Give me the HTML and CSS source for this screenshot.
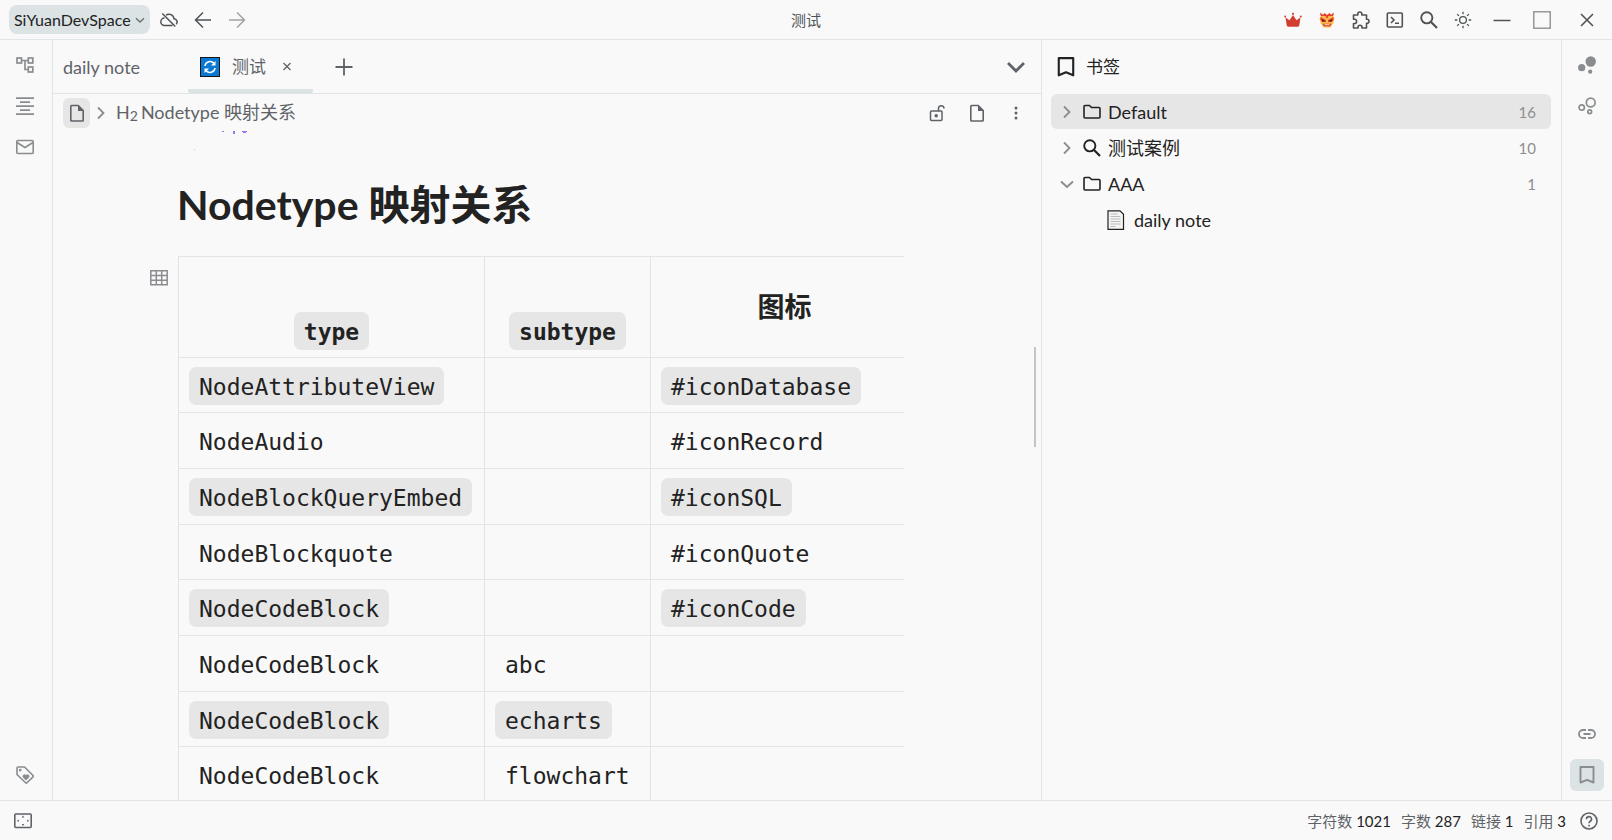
FILE: index.html
```html
<!DOCTYPE html>
<html lang="zh-CN">
<head>
<meta charset="utf-8">
<title>测试</title>
<link rel="stylesheet" href="styles.css">
</head>
<body>
<svg class="defs" aria-hidden="true">
  <symbol id="right" viewBox="0 0 18 18"><path d="M6 3.500l5.500 5.500-5.500 5.500" fill="none" stroke="currentColor" stroke-width="1.800"/></symbol>
  <symbol id="down" viewBox="0 0 18 18"><path d="M3 6.500l6 5.500 6-5.500" fill="none" stroke="currentColor" stroke-width="2"/></symbol>
  <symbol id="file" viewBox="0 0 18 18"><path d="M3.200 1.500h7l5 5v9.800q0 .7-.7.700H3.500q-.7 0-.7-.7V2.200q0-.7.700-.7z" fill="none" stroke="currentColor" stroke-width="1.600"/><path d="M10 1l6 6h-6z" fill="currentColor"/></symbol>
  <symbol id="folder" viewBox="0 0 18 18"><path d="M1 3.500q0-1 1-1h4.500l2 2H16q1 0 1 1V14q0 1-1 1H2q-1 0-1-1z" fill="none" stroke="currentColor" stroke-width="1.600"/></symbol>
  <symbol id="search" viewBox="0 0 18 18"><circle cx="6.800" cy="6.800" r="5.600" fill="none" stroke="currentColor" stroke-width="1.900"/><path d="M10.800 10.800l6.200 6.200" stroke="currentColor" stroke-width="2.200"/></symbol>
  <symbol id="bookmark" viewBox="0 0 18 18"><path d="M2.500 1h13v15.500L9 13.800l-6.500 2.700z" fill="none" stroke="currentColor" stroke-width="1.900" stroke-linejoin="round"/></symbol>
</svg>
<header class="topbar">
  <div class="side">
    <button class="workspace">SiYuanDevSpace<svg class="icon small"><use href="#down"/></svg></button>
    <button class="tool" aria-label="同步"><svg class="icon" viewBox="0 0 18 18" fill="none" stroke="currentColor" stroke-width="1.500"><path d="M6 4.200a5 5 0 0 1 8 3.600 3.200 3.200 0 0 1 2.200 5.400M12.500 14.500H4.500a3.700 3.700 0 0 1 0-7.400M2.300 2.500l13 13"/></svg></button>
    <button class="tool" aria-label="后退"><svg class="icon" viewBox="0 0 18 18" fill="none" stroke="currentColor" stroke-width="1.500"><path d="M17 9H2M9 1.500L1.500 9 9 16.500"/></svg></button>
    <button class="tool faded" aria-label="前进"><svg class="icon" viewBox="0 0 18 18" fill="none" stroke="currentColor" stroke-width="1.500"><path d="M1 9h15M9 1.500L16.500 9 9 16.500"/></svg></button>
  </div>
  <div class="title">测试</div>
  <div class="side end">
    <button class="tool" aria-label="会员"><svg class="icon" viewBox="0 0 18 18" fill="#d23f31"><path d="M2.500 13L1.500 6.500l4 2.700L9 4l3.500 5.200 4-2.700-1 6.500q-.2 2.800-1.500 2.800H4Q2.700 15.800 2.500 13z"/><circle cx="1.200" cy="5.500" r="1"/><circle cx="9" cy="2.800" r="1.100"/><circle cx="16.800" cy="5.500" r="1"/></svg></button>
    <button class="tool" aria-label="账号"><svg class="icon" viewBox="0 0 18 18"><path d="M3 6L2 1.500l3 2.300L6.500 2 9 4l2.500-2L13 3.800l3-2.300L15 6z" fill="#e8402f"/><path d="M1.500 7l2-2h11l2 2-1 5-3 4.500h-7l-3-4.500z" fill="#fbbd4c"/><path d="M2.500 6l5.500 3v2H4.500L2.500 9zM15.500 6L10 9v2h3.500l2-2zM7.500 5h3L9 8z" fill="#e8402f"/><path d="M3.500 8l4 2.200-3 .6zM14.500 8l-4 2.200 3 .6z" fill="#45221c"/><path d="M4.500 12.800h9L12 15.200H6z" fill="#d53527"/><path d="M6 13.200h6l-1 1H7z" fill="#fff5d6"/></svg></button>
    <button class="tool" aria-label="插件"><svg class="icon" viewBox="0 0 18 18" fill="none" stroke="currentColor" stroke-width="1.600"><path d="M1.500 4h4.300V3a2 2 0 0 1 4 0v1h4.700v4.300h.5a2 2 0 0 1 0 4h-.5V17H10v-.8a2 2 0 0 0-4 0v.8H1.500v-4.500h1a2 2 0 0 0 0-4.200h-1z" stroke-linejoin="round"/></svg></button>
    <button class="tool" aria-label="命令面板"><svg class="icon" viewBox="0 0 18 18" fill="none" stroke="currentColor" stroke-width="1.600"><rect x="1.300" y="2" width="15" height="14" rx="1"/><path d="M5 6l3 3-3 3M9 12.300h4"/></svg></button>
    <button class="tool" aria-label="搜索"><svg class="icon"><use href="#search"/></svg></button>
    <button class="tool" aria-label="外观"><svg class="icon" viewBox="0 0 18 18" fill="none" stroke="currentColor" stroke-width="1.300"><circle cx="9" cy="9" r="3.400"/><path d="M9 .8v2.500M9 14.700v2.500M.8 9h2.500M14.700 9h2.500M3.200 3.200l1.700 1.700M13.100 13.100l1.700 1.700M3.200 14.800l1.700-1.700M13.100 4.900l1.700-1.700"/></svg></button>
    <div class="windowbuttons">
      <button class="win" aria-label="最小化"><svg class="icon" viewBox="0 0 18 18" stroke="currentColor" stroke-width="1.500"><path d="M.5 9.500h17"/></svg></button>
      <button class="win" aria-label="最大化"><svg class="icon" viewBox="0 0 18 18" fill="none" stroke="#85898c"><rect x=".8" y=".8" width="16.400" height="16.400" stroke-width="1.300"/></svg></button>
      <button class="win close" aria-label="关闭"><svg class="icon" viewBox="0 0 18 18" stroke="currentColor" stroke-width="1.600"><path d="M3 3l12 12M15 3L3 15"/></svg></button>
    </div>
  </div>
</header>
<div class="workarea">
  <nav class="dock">
    <button aria-label="文档树"><svg class="icon" viewBox="0 0 18 18" fill="none" stroke="currentColor" stroke-width="1.700"><rect x="1" y="2" width="4.500" height="5"/><rect x="12.300" y="2" width="4.500" height="5"/><rect x="12.300" y="11" width="4.500" height="5"/><path d="M5.500 4.500h7M9 4.500V13.500h3.500"/></svg></button>
    <button aria-label="大纲"><svg class="icon" viewBox="0 0 18 18" stroke="currentColor" stroke-width="1.700"><path d="M0 1.200h18M4 5.200h10M0 9.200h18M4 13.200h10M0 17.200h18"/></svg></button>
    <button aria-label="收集箱"><svg class="icon" viewBox="0 0 18 18" fill="none" stroke="currentColor" stroke-width="1.600"><rect x=".8" y="2.500" width="16.400" height="13" rx="1"/><path d="M1 4.500l8 5 8-5"/></svg></button>
    <button class="push" aria-label="标签"><svg class="icon" viewBox="0 0 18 18" fill="none" stroke="currentColor" stroke-width="1.600"><path d="M1 2q0-1 1-1h6.500L17 9.500q.7.700 0 1.400L11 16.800q-.7.700-1.400 0L1 8.500z"/><circle cx="4.200" cy="4.200" r=".6"/><path d="M10 14.500L6.800 11.300a1.800 1.800 0 0 1 3.200-2 1.800 1.800 0 0 1 3.200 2z" fill="currentColor" stroke="none"/></svg></button>
  </nav>
  <main class="center">
    <div class="tabs">
      <button class="tab">daily note</button>
      <button class="tab active"><svg class="tabicon" viewBox="0 0 20 20"><rect x=".5" y=".5" width="19" height="19" fill="#0b78d4" stroke="#151515"/><path d="M5 9a5 5 0 0 1 9-2.500M15 11a5 5 0 0 1-9 2.500" fill="none" stroke="#fff" stroke-width="1.500"/><path d="M15.500 4v4.500H11zM4.500 16v-4.500H9z" fill="#fff"/></svg><span>测试</span><svg class="cross" viewBox="0 0 10 10" stroke="currentColor" stroke-width="1.300"><path d="M1.500 1l7 7M8.500 1l-7 7"/></svg></button>
      <button class="newtab" aria-label="新建"><svg class="icon" viewBox="0 0 18 18" stroke="currentColor" stroke-width="1.800"><path d="M9 .5v17M.5 9h17"/></svg></button>
      <button class="more" aria-label="更多标签"><svg class="icon" viewBox="0 0 18 18" fill="none" stroke="currentColor" stroke-width="2.800"><path d="M1 5l8 8 8-8"/></svg></button>
    </div>
    <div class="breadcrumb">
      <button class="crumbdoc" aria-label="文档"><svg class="icon"><use href="#file"/></svg></button>
      <svg class="icon arrow"><use href="#right"/></svg>
      <a class="crumb" href="#heading"><span>H<small>2</small></span>Nodetype 映射关系</a>
      <button class="action first" aria-label="锁定"><svg class="icon" viewBox="0 0 18 18" fill="none" stroke="currentColor" stroke-width="1.500"><rect x="1.500" y="7" width="11.500" height="9.500" rx="1"/><path d="M9.500 7V4.500a2.700 2.700 0 0 1 5.500 0"/><circle cx="7.200" cy="11.800" r="1" fill="currentColor"/></svg></button>
      <button class="action" aria-label="文档菜单"><svg class="icon"><use href="#file"/></svg></button>
      <button class="action" aria-label="更多"><svg class="icon" viewBox="0 0 18 18" fill="currentColor"><circle cx="9" cy="4" r="1.500"/><circle cx="9" cy="9" r="1.500"/><circle cx="9" cy="14" r="1.500"/></svg></button>
    </div>
    <section class="editor">
      <svg class="remnant" viewBox="0 0 54 20" fill="#9b74ea"><path d="M28 0h2v1h-2zM39 0h2v3h-2zM48 0h5v1h-1v1h-3V1h-1z"/><path d="M0 18h1v1H0z" fill="#ccc"/></svg>
      <h2 id="heading">Nodetype 映射关系</h2>
      <div class="block">
        <svg class="gutter" viewBox="0 0 18 18" fill="none" stroke="currentColor" stroke-width="1.500"><path d="M.8 1.800h16.400v14H.8zM.8 6.500h16.400M.8 11.200h16.400M6.300 2v14M11.700 2v14"/></svg>
        <div class="tablewrap">
        <table>
          <colgroup><col class="c1"><col class="c2"><col class="c3"></colgroup>
          <thead><tr><th><code class="on">type</code></th><th><code class="on">subtype</code></th><th class="label">图标</th></tr></thead>
          <tbody>
            <tr><td><code class="on">NodeAttributeView</code></td><td></td><td><code class="on">#iconDatabase</code></td></tr>
            <tr><td><code>NodeAudio</code></td><td></td><td><code>#iconRecord</code></td></tr>
            <tr><td><code class="on">NodeBlockQueryEmbed</code></td><td></td><td><code class="on">#iconSQL</code></td></tr>
            <tr><td><code>NodeBlockquote</code></td><td></td><td><code>#iconQuote</code></td></tr>
            <tr><td><code class="on">NodeCodeBlock</code></td><td></td><td><code class="on">#iconCode</code></td></tr>
            <tr><td><code>NodeCodeBlock</code></td><td><code>abc</code></td><td></td></tr>
            <tr><td><code class="on">NodeCodeBlock</code></td><td><code class="on">echarts</code></td><td></td></tr>
            <tr><td><code>NodeCodeBlock</code></td><td><code>flowchart</code></td><td></td></tr>
          </tbody>
        </table>
        </div>
      </div>
      <div class="thumb"></div>
    </section>
  </main>
  <aside class="panel">
    <h3><svg class="icon big"><use href="#bookmark"/></svg>书签</h3>
    <ul>
      <li class="current"><svg class="icon arrow"><use href="#right"/></svg><svg class="icon"><use href="#folder"/></svg><span>Default</span><span class="count">16</span></li>
      <li><svg class="icon arrow"><use href="#right"/></svg><svg class="icon"><use href="#search"/></svg><span>测试案例</span><span class="count">10</span></li>
      <li><svg class="icon arrow"><use href="#down"/></svg><svg class="icon"><use href="#folder"/></svg><span>AAA</span><span class="count">1</span></li>
      <li class="child"><svg class="page" viewBox="0 0 18 20"><path d="M1 .8h12l3.500 3.500v15H1z" fill="#f4f4f4" stroke="#222" stroke-width="1.200"/><path d="M3.500 4h7M3.500 6.500h10M3.500 9h10M3.500 11.500h10M3.500 14h10M3.500 16.500h5" stroke="#bbb"/></svg><span>daily note</span></li>
    </ul>
  </aside>
  <nav class="dock right">
    <button aria-label="关系图"><svg class="icon" viewBox="0 0 18 18" fill="currentColor"><circle cx="12.700" cy="5.500" r="5.200"/><circle cx="3.700" cy="11.700" r="3.600"/><circle cx="12.200" cy="15.700" r="2.100"/></svg></button>
    <button aria-label="全局关系图"><svg class="icon" viewBox="0 0 18 18" fill="none" stroke="currentColor" stroke-width="1.700"><circle cx="12.700" cy="5.500" r="4.400"/><circle cx="3.700" cy="10.500" r="2.700"/><circle cx="11.700" cy="14.800" r="1.900"/></svg></button>
    <button class="push" aria-label="反向链接"><svg class="icon" viewBox="0 0 18 18" fill="none" stroke="currentColor" stroke-width="1.800"><path d="M8 5H5a4 4 0 0 0 0 8h3M10 5h3a4 4 0 0 1 0 8h-3M5.500 9h7"/></svg></button>
    <button class="selected" aria-label="书签"><svg class="icon"><use href="#bookmark"/></svg></button>
  </nav>
</div>
<footer class="status">
  <button class="tool" aria-label="隐藏停靠栏"><svg class="icon" viewBox="0 0 18 18" fill="none" stroke="currentColor" stroke-width="1.600"><rect x=".8" y="2" width="16.400" height="13.500" rx="1"/><path d="M9 3.500l1.300 2H7.700zM9 14l1.300-2H7.700zM2.800 8.800l2-1.300v2.600zM15.200 8.800l-2-1.300v2.600z" fill="currentColor" stroke="none"/></svg></button>
  <span class="stat first">字符数 <b>1021</b></span><span class="stat">字数 <b>287</b></span><span class="stat">链接 <b>1</b></span><span class="stat">引用 <b>3</b></span>
  <button class="tool" aria-label="帮助"><svg class="icon" viewBox="0 0 18 18" fill="none" stroke="currentColor" stroke-width="1.600"><circle cx="9" cy="9" r="8"/><path d="M6.500 7.200a2.500 2.500 0 1 1 3.700 2.100Q9 10 9 11.300M9 12.800v1.700"/></svg></button>
</footer>
</body>
</html>
```
FILE: styles.css
```css
* { box-sizing: border-box; }
html, body { height: 100%; }
body {
  margin: 0;
  display: flex;
  flex-direction: column;
  overflow: hidden;
  background: #f9f9f9;
  color: #222;
  font: 18px/24px Lato, "Noto Sans CJK SC", sans-serif;
}
button {
  display: flex;
  align-items: center;
  justify-content: center;
  padding: 0;
  border: 0;
  background: none;
  color: inherit;
  font: inherit;
}
svg { flex: none; }
.defs { position: absolute; width: 0; height: 0; }
.icon { width: 18px; height: 18px; }
.small { width: 12px; height: 12px; }

.topbar {
  display: grid;
  grid-template-columns: 1fr auto 1fr;
  flex: none;
  align-items: center;
  height: 40px;
  border-bottom: 1px solid #e2e4e5;
  color: #4f5356;
}
.side { display: flex; align-items: center; padding-left: 9px; }
.side.end { justify-content: flex-end; padding-left: 0; }
.workspace {
  gap: 3px;
  height: 29px;
  margin-right: 2px;
  padding: 0 4px 0 5px;
  border-radius: 8px;
  background: #dbe3e4;
  color: #222;
  font-size: 16px;
}
.workspace svg { color: #6b6f72; }
.tool { width: 34px; height: 30px; }
.faded { color: #a0a3a5; }
.title { font-size: 15px; }
.windowbuttons { display: flex; margin-left: 2px; }
.win { width: 40px; height: 30px; }
.close { width: 50px; }

.workarea { display: flex; flex: 1; min-height: 0; }
.dock {
  display: flex;
  flex: none;
  flex-direction: column;
  align-items: center;
  gap: 9px;
  width: 53px;
  padding: 9px 2px 9px 0;
  border-right: 1px solid #e2e4e5;
  color: #8a8d90;
}
.dock button { width: 34px; height: 32px; border-radius: 6px; }
.dock .push { margin-top: auto; }
.dock.right { width: 51px; padding: 9px 0; border-right: 0; border-left: 1px solid #e2e4e5; }
.dock .selected { background: #dbe3e4; }

.center { display: flex; flex: 1; flex-direction: column; min-width: 0; }
.tabs {
  display: flex;
  flex: none;
  height: 54px;
  padding: 0 16px 0 0;
  border-bottom: 1px solid #dfe4e5;
  color: #5f6368;
}
.tab { padding: 0 10px; min-width: 135px; justify-content: flex-start; }
.tab.active { gap: 12px; min-width: 125px; padding: 4px 12px 0; border-bottom: 4px solid #dbe3e4; border-radius: 2px; font-size: 17px; }
.tabicon { width: 20px; height: 20px; }
.cross { width: 10px; height: 10px; margin-left: 4px; }
.newtab { width: 62px; }
.more { margin-left: auto; }
.breadcrumb {
  display: flex;
  flex: none;
  align-items: center;
  height: 37px;
  padding: 0 16px 0 10px;
  color: #5f6368;
}
.crumbdoc { width: 27px; height: 30px; margin-right: 2px; border-radius: 6px; background: #e6e6e6; }
.crumb { display: flex; gap: 3px; margin-left: 6px; padding-bottom: 2px; color: inherit; text-decoration: none; }
.crumb small { font-size: 14px; vertical-align: -2px; line-height: 1; }
.action { margin-left: 21px; }
.action.first { margin-left: auto; }

.editor { position: relative; flex: 1; min-height: 0; overflow: hidden; padding: 0 137px 0 97px; }
.remnant { position: absolute; top: 0; left: 141px; width: 54px; height: 20px; }
h2 { margin: 44px 0 21px 27px; font-size: 41px; line-height: 60px; font-weight: 700; }
.block { display: flex; }
.gutter { width: 18px; height: 18px; margin: 13px 10px 0 0; color: #8a8d90; }
.tablewrap { flex: 1; min-width: 0; overflow: hidden; }
table { width: 740px; table-layout: fixed; border-collapse: collapse; }
.c1 { width: 306px; }
.c2 { width: 166px; }
.c3 { width: 268px; }
th, td { border: 1px solid #e2e4e5; padding: 9px 10px 7px; text-align: left; vertical-align: top; }
td { height: 56px; }
tbody tr:nth-child(3n+1) td { height: 55px; }
th { height: 101px; text-align: center; vertical-align: bottom; }
th.label { padding: 7px 10px; vertical-align: middle; font-size: 27px; line-height: 40px; }
code {
  display: block;
  width: max-content;
  height: 38px;
  padding: 1px 10px 0;
  border-radius: 7px;
  font: 23px/38px "DejaVu Sans Mono", monospace;
}
th code { margin: 0 auto; font-weight: 700; }
code.on { background: #e6e6e6; }
.thumb { position: absolute; top: 216px; right: 5px; width: 2px; height: 100px; background: #c2c4c5; }

.panel { flex: none; width: 520px; padding: 0 10px 0 9px; border-left: 1px solid #e2e4e5; }
h3 { display: flex; align-items: center; gap: 10px; height: 54px; margin: 0; padding-left: 5px; font-size: 17px; font-weight: 400; }
.big { width: 20px; height: 20px; }
.panel ul { display: flex; flex-direction: column; gap: 1px; margin: 0; padding: 0; list-style: none; }
.panel li { display: flex; align-items: center; gap: 7px; height: 35px; padding: 0 15px 0 7px; border-radius: 6px; }
.panel li.current { background: #e6e6e6; }
.panel li.child { padding-left: 56px; gap: 9px; }
.page { width: 18px; height: 20px; }
.arrow { color: #8a8d90; }
.count { margin-left: auto; color: #8f8f8f; font-size: 15px; }

.status {
  display: flex;
  flex: none;
  align-items: center;
  height: 40px;
  padding: 0 6px;
  border-top: 1px solid #e2e4e5;
  color: #5f6368;
  font-size: 15px;
}
.stat { margin-right: 10px; }
.stat:last-of-type { margin-right: 6px; }
.stat.first { margin-left: auto; }
.stat b { color: #222; font-weight: 400; }
```
